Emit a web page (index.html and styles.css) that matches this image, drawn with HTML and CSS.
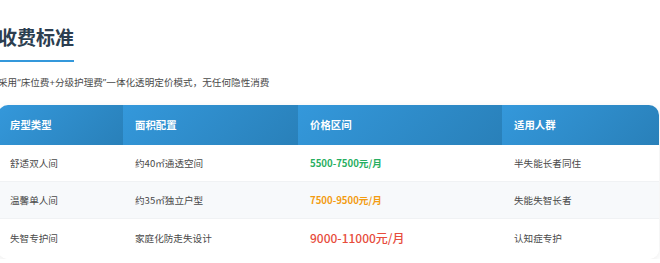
FILE: index.html
```html
<!DOCTYPE html>
<html lang="zh-CN">
<head>
<meta charset="utf-8">
<title>收费标准</title>
<link rel="stylesheet" href="styles.css">
</head>
<body>
<section class="pricing">
  <h2 class="title">收费标准</h2>
  <p class="subtitle">采用“床位费+分级护理费”一体化透明定价模式，无任何隐性消费</p>
  <table class="price-table">
    <colgroup>
      <col class="c1"><col class="c2"><col class="c3"><col class="c4">
    </colgroup>
    <thead>
      <tr><th>房型类型</th><th>面积配置</th><th>价格区间</th><th>适用人群</th></tr>
    </thead>
    <tbody>
      <tr><td>舒适双人间</td><td>约40㎡通透空间</td><td><span class="price green">5500-7500元/月</span></td><td>半失能长者同住</td></tr>
      <tr class="alt"><td>温馨单人间</td><td>约35㎡独立户型</td><td><span class="price orange">7500-9500元/月</span></td><td>失能失智长者</td></tr>
      <tr><td>失智专护间</td><td>家庭化防走失设计</td><td><span class="price red">9000-11000元/月</span></td><td>认知症专护</td></tr>
    </tbody>
  </table>
</section>
</body>
</html>
```
FILE: styles.css
```css
html, body {
  margin: 0;
  padding: 0;
  background: #ffffff;
  overflow: hidden;
}
body {
  font-family: "Noto Sans CJK SC", "Noto Sans", sans-serif;
  color: #555;
}
.pricing {
  margin-left: -2px;
  width: 661px;
}
.title {
  display: inline-block;
  margin: 24px 0 0 0;
  padding-bottom: 10px;
  border-bottom: 2px solid #3498db;
  font-size: 19px;
  line-height: 26px;
  font-weight: 700;
  color: #2c3e50;
}
.subtitle {
  margin: 12px 0 0 0;
  font-family: "Noto Sans", "Noto Sans CJK SC", sans-serif;
  font-size: 9.6px;
  line-height: 18px;
  color: #4a4a4a;
}
.price-table {
  margin-top: 13px;
  width: 661px;
  border-collapse: separate;
  border-spacing: 0;
  border-radius: 10px;
  overflow: hidden;
  box-shadow: 0 2px 8px rgba(0,0,0,0.08);
  table-layout: fixed;
}
.c1 { width: 125px; }
.c2 { width: 175px; }
.c3 { width: 204px; }
.c4 { width: 157px; }
.price-table th {
  background: linear-gradient(135deg, #3498db, #2980b9);
  color: #fff;
  font-size: 10.4px;
  font-weight: 700;
  text-align: left;
  padding: 11px 12px;
  line-height: 18px;
}
.price-table td {
  font-size: 9.6px;
  line-height: 17px;
  padding: 10px 12px 9px;
  color: #4a4a4a;
  border-bottom: 1px solid #f0f2f4;
  background: #fff;
}
.price-table tr:last-child td {
  border-bottom: none;
  padding-bottom: 11px;
}
.price-table tr.alt td {
  background: #f7f9fb;
}
.price { font-weight: 700; }
.green { color: #27ae60; }
.orange { color: #f39c12; }
.red {
  color: #e74c3c;
  font-size: 12px;
  font-weight: 500;
}
```
